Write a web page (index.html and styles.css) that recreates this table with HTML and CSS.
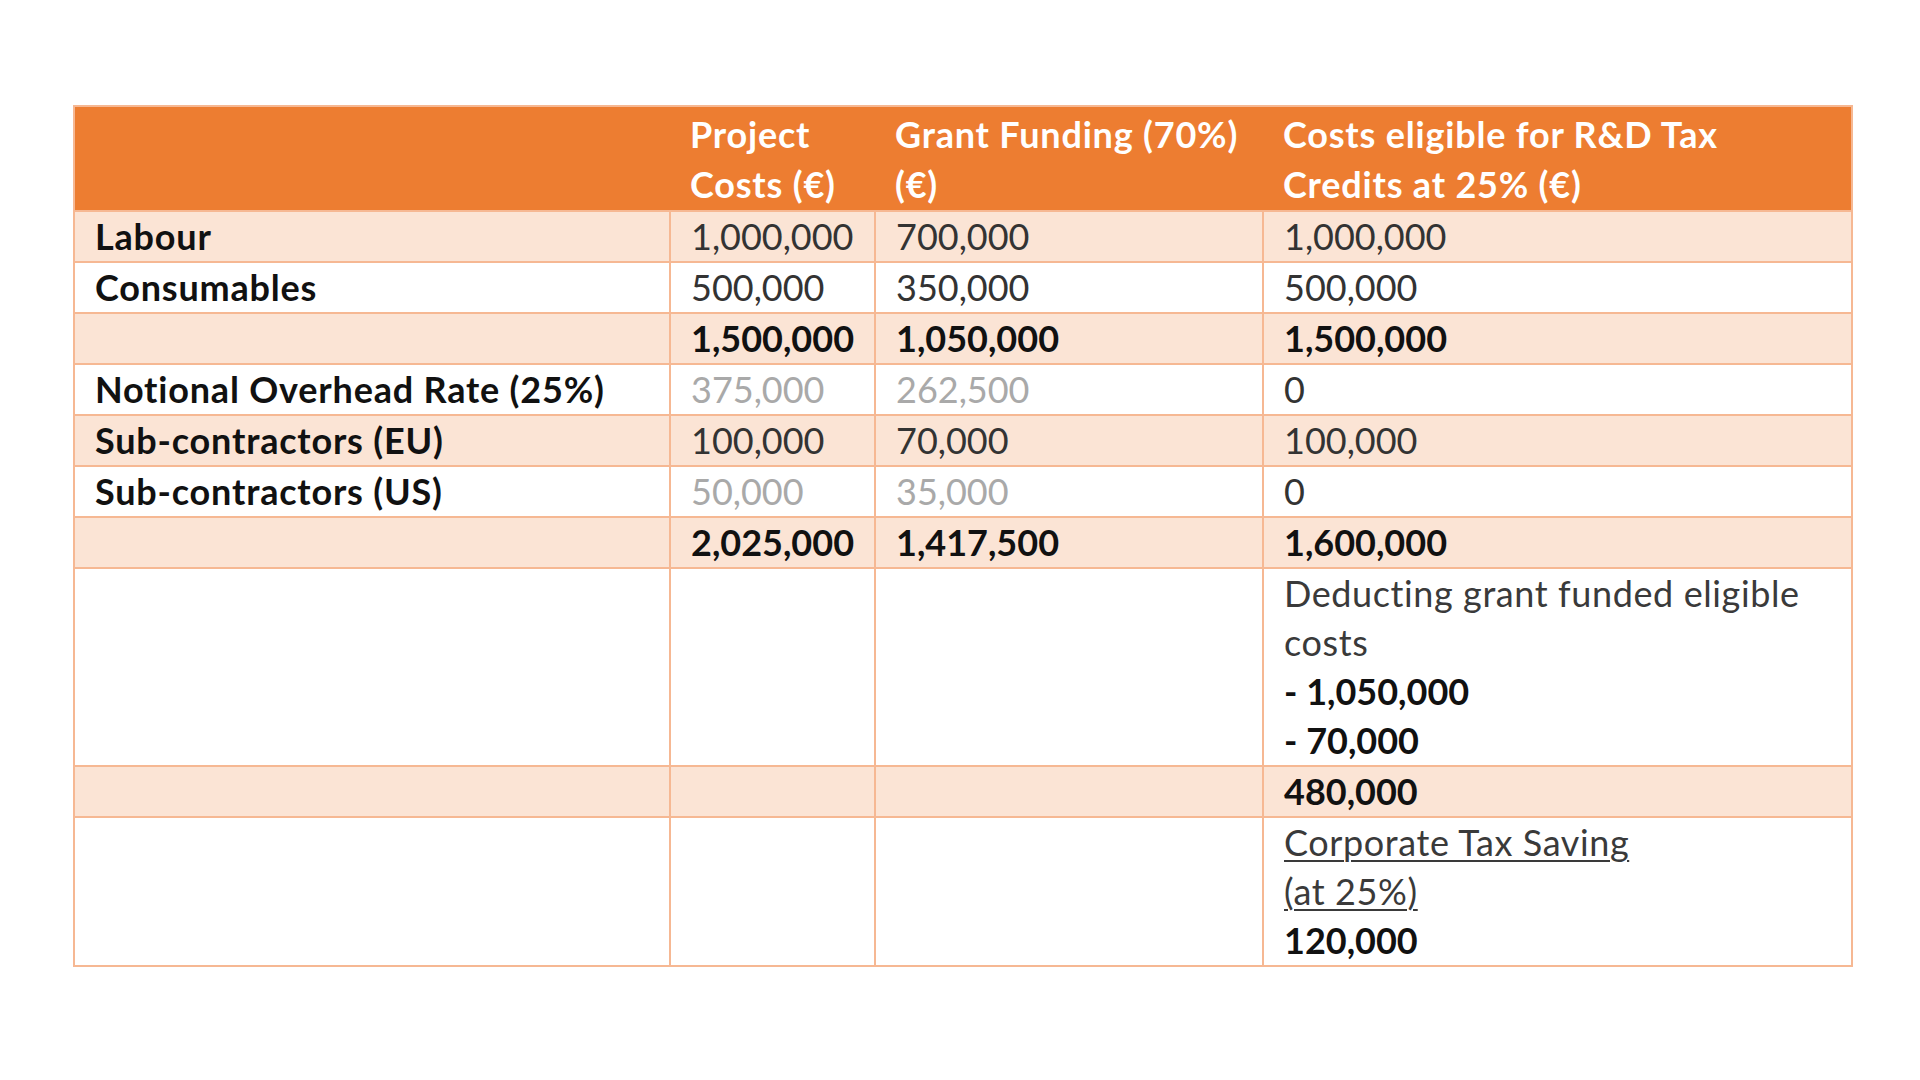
FILE: index.html
```html
<!DOCTYPE html>
<html lang="en">
<head>
<meta charset="utf-8">
<title>R&amp;D Tax Credits</title>
<link rel="stylesheet" href="styles.css">
</head>
<body>
<main class="page">
  <table class="costs">
    <colgroup>
      <col class="c-label">
      <col class="c-project">
      <col class="c-grant">
      <col class="c-eligible">
    </colgroup>
    <thead>
      <tr>
        <th></th>
        <th>Project<br>Costs (€)</th>
        <th>Grant Funding (70%)<br>(€)</th>
        <th>Costs eligible for R&amp;D Tax<br>Credits at 25% (€)</th>
      </tr>
    </thead>
    <tbody>
      <tr class="band">
        <td class="label">Labour</td>
        <td>1,000,000</td>
        <td>700,000</td>
        <td>1,000,000</td>
      </tr>
      <tr>
        <td class="label">Consumables</td>
        <td>500,000</td>
        <td>350,000</td>
        <td>500,000</td>
      </tr>
      <tr class="band total">
        <td></td>
        <td>1,500,000</td>
        <td>1,050,000</td>
        <td>1,500,000</td>
      </tr>
      <tr>
        <td class="label">Notional Overhead Rate (25%)</td>
        <td class="muted">375,000</td>
        <td class="muted">262,500</td>
        <td>0</td>
      </tr>
      <tr class="band">
        <td class="label">Sub-contractors (EU)</td>
        <td>100,000</td>
        <td>70,000</td>
        <td>100,000</td>
      </tr>
      <tr>
        <td class="label">Sub-contractors (US)</td>
        <td class="muted">50,000</td>
        <td class="muted">35,000</td>
        <td>0</td>
      </tr>
      <tr class="band total">
        <td></td>
        <td>2,025,000</td>
        <td>1,417,500</td>
        <td>1,600,000</td>
      </tr>
      <tr>
        <td></td>
        <td></td>
        <td></td>
        <td class="note">Deducting grant funded eligible<br>costs<br><b>- 1,050,000</b><br><b>- 70,000</b></td>
      </tr>
      <tr class="band total">
        <td></td>
        <td></td>
        <td></td>
        <td>480,000</td>
      </tr>
      <tr>
        <td></td>
        <td></td>
        <td></td>
        <td class="note"><u>Corporate Tax Saving</u><br><u>(at 25%)</u><br><b>120,000</b></td>
      </tr>
    </tbody>
  </table>
</main>
</body>
</html>
```
FILE: styles.css
```css
html, body {
  margin: 0;
  padding: 0;
  background: #ffffff;
}

.page {
  padding: 105px 0 0 73px;
}

.costs {
  border-collapse: collapse;
  table-layout: fixed;
  width: 1778px;
  font-family: Lato, "Open Sans", sans-serif;
  font-size: 36px;
  line-height: 49px;
  color: #333333;
}

.c-label { width: 596px; }
.c-project { width: 205px; }
.c-grant { width: 388px; }
.c-eligible { width: 589px; }

.costs th {
  background: #ed7d31;
  color: #ffffff;
  font-weight: 700;
  text-align: left;
  padding: 2px 20px 1px;
  line-height: 50px;
  letter-spacing: 0.8px;
  border-top: 2px solid #f6b893;
  border-bottom: 2px solid #f6b893;
  vertical-align: top;
  white-space: nowrap;
}

.costs th:first-child { border-left: 2px solid #f6b893; }
.costs th:last-child { border-right: 2px solid #f6b893; }

.costs td {
  border: 2px solid #f6b893;
  padding: 0 20px;
  vertical-align: top;
  white-space: nowrap;
}

.costs tr.band td {
  background: #fbe4d5;
}

.costs td.label {
  font-weight: 700;
  color: #111111;
  letter-spacing: 0.8px;
}

.costs tr.total td {
  font-weight: 700;
  color: #111111;
}

.costs td.muted {
  color: #a9a9a9;
}

.costs td.note {
  color: #3a3a3a;
  letter-spacing: 0.6px;
}

.costs td.note b {
  color: #111111;
  font-weight: 700;
  letter-spacing: 0;
}

.costs td.note u {
  text-decoration-thickness: 2px;
  text-underline-offset: 4px;
}
```
